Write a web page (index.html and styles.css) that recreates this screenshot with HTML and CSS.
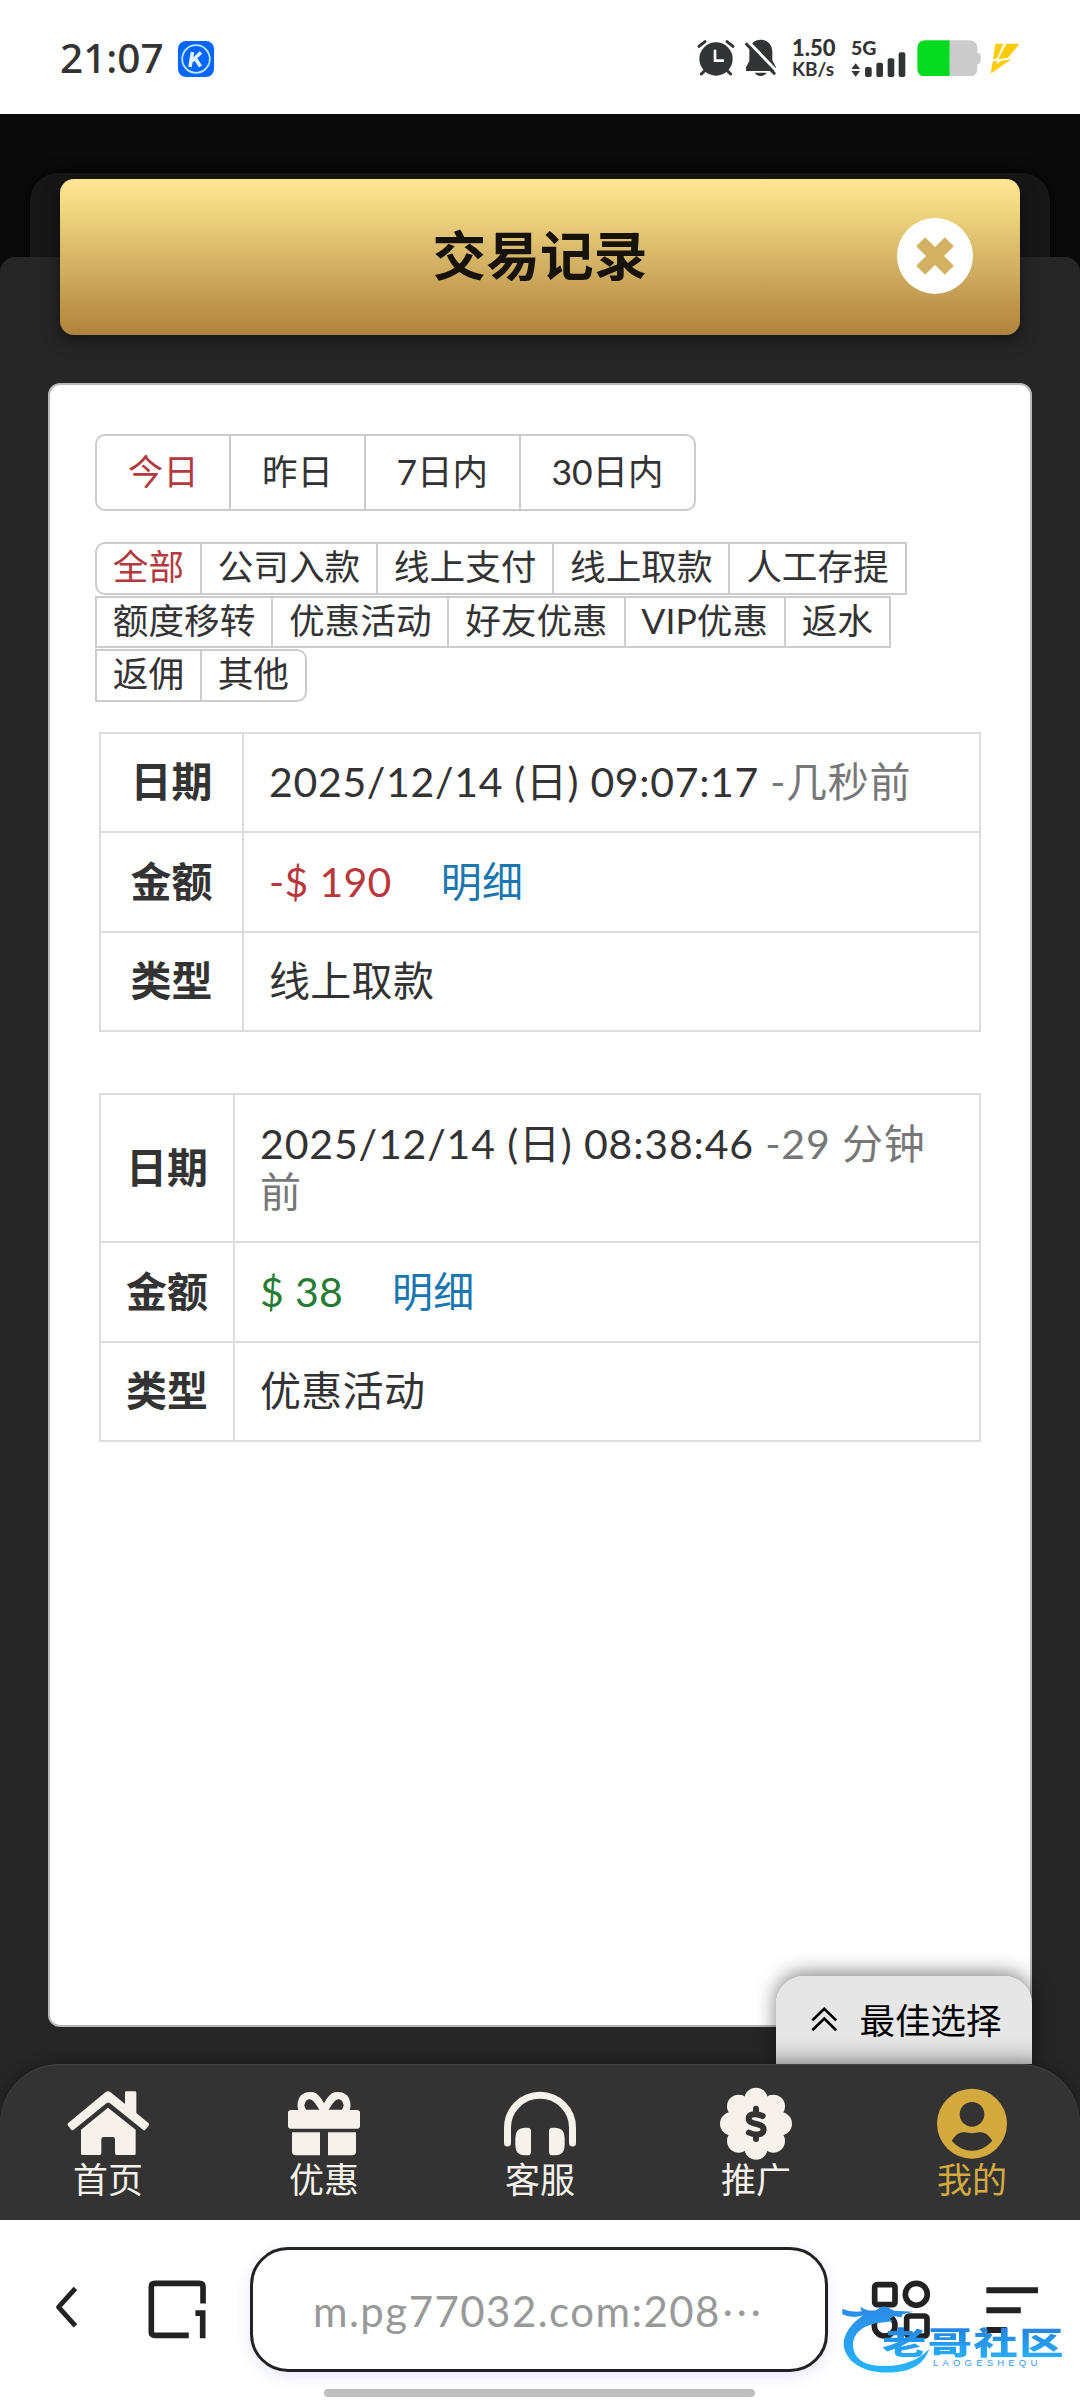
FILE: index.html
```html
<!DOCTYPE html>
<html lang="zh-CN">
<head>
<meta charset="utf-8">
<meta name="viewport" content="width=1080">
<title>交易记录</title>
<link rel="stylesheet" href="styles.css">
</head>
<body>
<header class="status">
  <span class="clock">21:07</span>
  <svg class="app-badge" viewBox="0 0 36 36"><rect width="36" height="36" rx="8" fill="#0765fb"/><circle cx="18" cy="18" r="13.8" fill="none" stroke="#b9e6ff" stroke-width="1.8"/><path d="M14.5 11 12 26M23 11.500 14 20M17 17l5.500 8.500" fill="none" stroke="#dff4ff" stroke-width="3.600"/></svg>
  <div class="status-right">
    <svg class="alarm" viewBox="50 28 114 112"><g fill="none" stroke="#333436" stroke-width="9" stroke-linecap="round"><path d="M56 50 74 36M140 36l18 14M72 124l-9 9M142 124l9 9"/></g><circle cx="107" cy="88" r="50" fill="#333436"/><path d="M104 60v33h27" fill="none" stroke="#fff" stroke-width="8"/></svg>
    <svg class="bell" viewBox="190 28 98 112"><path d="M240 30c22 0 35 16 35 38v24l11 21v11h-90v-11l10-19V68c0-22 12-38 34-38zM222 129h36q-6 10-18 10t-18-10z" fill="#333436"/><path d="M203 36l86 89" stroke="#fff" stroke-width="9"/><path d="M195 41l88 93" stroke="#333436" stroke-width="9"/></svg>
    <div class="speed"><b>1.50</b><span>KB/s</span></div>
    <div class="signal"><b>5G</b>
      <svg viewBox="516 64 164 76"><g fill="#333436"><path d="M517 115l13-17 13 17zM517 121h26l-13 17z"/><rect x="558" y="109" width="20" height="30" rx="6"/><rect x="592" y="96" width="20" height="43" rx="6"/><rect x="626" y="83" width="20" height="56" rx="6"/><rect x="659" y="65" width="20" height="74" rx="6"/></g></svg>
    </div>
    <svg class="battery" viewBox="711 29 192 110"><path d="M809 30h58q25 0 25 25v13q10 0 10 8v17q0 8-10 8v13q0 25-25 25h-58z" fill="#cbcbcb"/><path d="M809 30h-72q-25 0-25 25v59q0 25 25 25h72z" fill="#04db20"/></svg>
    <svg class="bolt" viewBox="930 40 90 92"><path d="M946 42h24l-18 42-13 6zM979 42h40l-36 43-28 3zM938 96l14-4-2 12 12-10 32-5-62 43z" fill="#fecb09"/></svg>
  </div>
</header>

<main class="stage">
  <div class="back-card"></div>
  <div class="sheet"></div>
  <div class="title-bar">
    <h1>交易记录</h1>
    <svg class="close" viewBox="711 654 228 228"><circle cx="825" cy="768" r="114" fill="#fff"/><path d="M782 725l86 86M868 725l-86 86" stroke="#d4b062" stroke-width="38"/></svg>
  </div>
  <section class="panel">
    <div class="tabs days"><span class="on">今日</span><span>昨日</span><span>7日内</span><span>30日内</span></div>
    <div class="tabs kinds"><span class="on">全部</span><span>公司入款</span><span>线上支付</span><span>线上取款</span><span>人工存提</span><span>额度移转</span><span>优惠活动</span><span>好友优惠</span><span>VIP优惠</span><span>返水</span><span>返佣</span><span>其他</span></div>
    <table class="record first">
      <tr><th>日期</th><td class="date">2025/12/14 (日) 09:07:17 <span class="ago">-几秒前</span></td></tr>
      <tr><th>金额</th><td><span class="minus">-$ 190</span><a>明细</a></td></tr>
      <tr><th>类型</th><td>线上取款</td></tr>
    </table>
    <table class="record second">
      <tr class="tall"><th>日期</th><td class="date">2025/12/14 (日) 08:38:46 <span class="ago">-29 分钟前</span></td></tr>
      <tr><th>金额</th><td><span class="plus">$ 38</span><a>明细</a></td></tr>
      <tr><th>类型</th><td>优惠活动</td></tr>
    </table>
  </section>
  <div class="best"><svg viewBox="213 194 80 78"><path d="M217 237l36-35 36 35M217 267l36-35 36 35" fill="none" stroke="#000" stroke-width="8"/></svg><span>最佳选择</span></div>
  <nav class="nav">
    <a><svg viewBox="162 138 324 222"><g fill="#f6f2eb"><path d="M204 250 317 156q7-4 14 0l44 36v-34q0-4 4-4h26q4 0 4 4v61l37 31q3 3 0 7l-10 12q-3 3-7 0L329 189q-5-3-9 0l-99 80q-4 3-7 0l-10-12q-3-3 0-7z"/><path d="M324 203l83 66v72q0 4-4 4h-53q-5 0-5-5v-42q0-7-7-7h-27q-7 0-7 7v42q0 5-5 5h-52q-4 0-4-4v-72z"/></g></svg><span>首页</span></a>
    <a><svg viewBox="810 138 324 222"><g fill="#f6f2eb"><path fill-rule="evenodd" d="M895 212q-8-28 8-46 16-14 38-9 16 5 31 33 15-28 31-33 22-5 38 9 16 18 8 46zM918 209h40q-14-22-21-28-9-6-17 0-12 12-2 28zM986 209h40q10-16-2-28-8-6-17 0-7 6-21 28z"/><rect x="864" y="210" width="216" height="56" rx="9"/><path d="M876 277h84v69h-72q-12 0-12-12zM984 277h84v57q0 12-12 12h-72z"/></g></svg><span>优惠</span></a>
    <a><svg viewBox="258 138 324 222"><path d="M322.500 309v-46a97.500 97.500 0 0 1 195 0v46" fill="none" stroke="#f6f2eb" stroke-width="21" stroke-linecap="round"/><path d="M375 263h8q10 0 10 11v61q0 11-10 11h-8q-29 0-29-30v-23q0-30 29-30zM465 263h-8q-10 0-10 11v61q0 11 10 11h8q29 0 29-30v-23q0-30-29-30z" fill="#f6f2eb"/></svg><span>客服</span></a>
    <a><svg viewBox="906 138 324 222"><g fill="#f6f2eb"><circle cx="1068" cy="251" r="75"/><circle cx="1068" cy="178" r="35"/><circle cx="1068" cy="324" r="35"/><circle cx="995" cy="251" r="35"/><circle cx="1141" cy="251" r="35"/><circle cx="1016" cy="199" r="35"/><circle cx="1120" cy="199" r="35"/><circle cx="1016" cy="303" r="35"/><circle cx="1120" cy="303" r="35"/></g><path d="M1088 228c-16-8-42-9-42 8 0 20 45 11 45 32 0 19-28 18-44 10M1068 206v14M1068 284v13" fill="none" stroke="#333" stroke-width="18" stroke-linecap="round"/></svg><span>推广</span></a>
    <a class="active"><svg viewBox="534 438 324 222"><circle cx="696" cy="551" r="105" fill="#d4aa3e"/><circle cx="696" cy="523" r="37" fill="#333"/><path d="M635 602q18-28 39-25 22 5 44 0 21-3 39 25-26 30-61 30t-61-30z" fill="#333"/></svg><span>我的</span></a>
  </nav>
</main>

<footer class="browser">
  <div class="tools">
    <svg class="back" viewBox="160 740 74 130"><path d="M226 746l-52 58 52 58" fill="none" stroke="#222" stroke-width="15" stroke-linejoin="round"/></svg>
    <svg class="windows" viewBox="444 720 176 178"><path d="M609 791v-50q0-11-11-11H464q-11 0-11 11v136q0 10 11 10h102M586 820h22v76" fill="none" stroke="#222" stroke-width="17"/></svg>
    <div class="address">m.pg77032.com:208<i>⋯</i></div>
    <svg class="apps" viewBox="275 238 180 180"><g fill="none" stroke="#222" stroke-width="17"><rect x="286" y="252" width="61" height="60" rx="7"/><circle cx="411" cy="281" r="33"/><circle cx="316" cy="375" r="31"/><rect x="382" y="346" width="61" height="60" rx="7"/></g></svg>
    <svg class="menu" viewBox="618 255 158 145"><path d="M618 268h156M618 328h104M618 388h62" stroke="#222" stroke-width="18"/></svg>
  </div>
  <div class="home-bar"></div>
  <div class="watermark">
    <svg viewBox="0 0 735 360">
      <defs><linearGradient id="wm" x1="0" y1="0" x2="0" y2="1"><stop offset="0" stop-color="#2b8be6"/><stop offset="1" stop-color="#27b4fb"/></linearGradient></defs>
      <path d="M22 116q26 12 58 8l-4-14q25 16 48 10 17-17 36-7l18 9 58 3-33 8-3 9-24-3-12 8 10 7-38 4q-22 1-48 14-42 25-32 68 13 50 97 48 84-2 130-52-20 61-96 70-91 9-138-34-42-44-8-94 16-24 44-42-34 12-63-3z" fill="url(#wm)"/>
    </svg>
    <span class="wm-name">老哥社区</span>
    <span class="wm-latin">LAOGESHEQU</span>
  </div>
</footer>
</body>
</html>
```

FILE: styles.css
```css
* { box-sizing: border-box; }
body {
  margin: 0;
  width: 1080px;
  height: 2400px;
  display: flex;
  flex-direction: column;
  overflow: hidden;
  background: #fff;
  color: #333;
  font-family: Lato, "Noto Sans CJK SC", sans-serif;
}
svg { display: block; flex: none; }

.status {
  height: 114px;
  padding: 2px 70px 0 60px;
  display: flex;
  align-items: center;
}
.clock { width: 118px; font: 500 40.500px/1 "Noto Sans", sans-serif; letter-spacing: 0; }
.app-badge { width: 36px; height: 36px; margin-top: 2px; }
.status-right { margin-left: auto; display: flex; align-items: center; height: 40px; }
.alarm { width: 38px; height: 37.300px; }
.bell { width: 32.700px; height: 37.300px; margin-left: 9px; }
.speed { width: 44px; margin-left: 15px; display: flex; flex-direction: column; white-space: nowrap; font: 700 19px/20px Lato, sans-serif; }
.speed b { font-size: 22px; line-height: 22px; font-weight: 900; }
.signal { position: relative; width: 55px; height: 38px; margin-left: 15px; font: 900 19.500px/17px Lato, sans-serif; }
.signal b { position: absolute; left: 0; top: 0; font-weight: 900; }
.signal svg { width: 54.700px; height: 25.300px; margin-top: 12.500px; }
.battery { width: 64px; height: 36.700px; margin-left: 11px; }
.bolt { width: 30px; height: 30.700px; margin-left: 9px; margin-right: -10px; }

.stage {
  position: relative;
  height: 2106px;
  display: flex;
  flex-direction: column;
  background: #0a0a0a;
}
.back-card { position: absolute; left: 30px; right: 30px; top: 59px; height: 300px; border-radius: 28px; background: #171717; box-shadow: 0 0 14px rgba(0,0,0,.7); }
.sheet { position: absolute; inset: 143px 0 0; border-radius: 15px 15px 0 0; background: #262626; }
.title-bar {
  position: relative;
  margin: 65px 60px 0;
  height: 156px;
  border-radius: 14px;
  background: linear-gradient(#fee693, #f0d680 20%, #d4b466 52%, #b4873f 96%, #a98343);
  box-shadow: 0 5px 16px rgba(0,0,0,.5);
  display: flex;
  align-items: center;
  justify-content: flex-end;
  padding-right: 47px;
}
.title-bar h1 { margin: 0; position: absolute; left: 0; right: 0; text-align: center; font-size: 53.700px; line-height: 78px; top: 37px; font-weight: 700; color: #17120a; }
.close { width: 76px; height: 76px; margin-bottom: 2px; }

.panel {
  position: relative;
  height: 1644px;
  margin: 48px 48px 0;
  padding: 49px 45px;
  border: 2px solid #b8b8b8;
  border-radius: 12px;
  background: #fff;
}
.tabs { display: flex; flex-wrap: wrap; font-size: 35.500px; }
.tabs span { border: 2.500px solid #ccc; margin-right: -2px; white-space: nowrap; text-align: center; }
.tabs .on { color: #b03a3e; }
.tabs span:first-child { border-radius: 10px 0 0 10px; }
.tabs span:last-child { border-radius: 0 10px 10px 0; }
.days span { height: 77px; line-height: 71px; padding: 0 30.700px; }
.kinds { margin-top: 31px; row-gap: 1px; width: 885px; font-size: 35.650px; }
.kinds span { height: 52.500px; line-height: 46px; padding: 0 15.800px; }

.record { width: 882px; margin-left: 4px; border-collapse: collapse; font-size: 41px; line-height: 48px; }
.first { margin-top: 30px; }
.second { margin-top: 61px; }
.record th, .record td { border: 2px solid #ddd; height: 99.500px; padding: 0 26px 0 25px; text-align: left; }
.record th { width: 143px; padding: 0; text-align: center; font-weight: 700; }
.second th { width: 134px; }
.record .tall th, .record .tall td { height: 148px; }
.record td { letter-spacing: .3px; }
.record .date { letter-spacing: .68px; }
.record.second .date { letter-spacing: .85px; }
.ago { color: #777; }
.minus { color: #b8383d; }
.plus { color: #277c35; }
.record a { color: #1a76b0; margin-left: 49px; }

.best {
  position: absolute;
  left: 776px;
  bottom: 156px;
  width: 256px;
  height: 88px;
  padding: 0 0 3px 35px;
  display: flex;
  align-items: center;
  gap: 22px;
  border-radius: 28px 28px 0 0;
  background: linear-gradient(#e6e6e6 70%, #c8c8c8);
  box-shadow: 0 -3px 20px rgba(0,0,0,.5);
  color: #000;
  font-size: 35.500px;
  white-space: nowrap;
}
.best svg { width: 26.500px; height: 26px; }
.nav {
  position: relative;
  margin-top: 37px;
  height: 156px;
  padding-top: 22px;
  display: grid;
  grid-template-columns: repeat(5, 1fr);
  border-radius: 60px 60px 0 0;
  background: #333;
  box-shadow: 0 -2px 14px rgba(0,0,0,.3), inset 0 1px 0 #444;
  color: #f6f2eb;
}
.nav a { display: flex; flex-direction: column; align-items: center; font-size: 35px; line-height: 38px; }
.nav svg { width: 108px; height: 74px; }
.nav .active { color: #d4aa3e; }

.browser { position: relative; height: 180px; background: #fff; }
.tools { display: flex; align-items: center; padding: 27px 0 0 54px; }
.back { width: 24px; height: 43px; margin-top: -4px; }
.windows { width: 59px; height: 59px; margin-left: 70px; }
.address {
  flex: none;
  width: 578px;
  height: 125px;
  margin-left: 43px;
  padding: 2px 0 0 60px;
  display: flex;
  align-items: center;
  border: 3.500px solid #222;
  border-radius: 38px;
  box-shadow: 0 4px 16px rgba(80,80,230,.14);
  color: #999;
  font-size: 42px;
  letter-spacing: 1.450px;
  white-space: nowrap;
}
.address i { font-style: normal; }
.apps { width: 60px; height: 60px; margin-left: 43px; }
.menu { width: 53px; height: 48px; margin-left: 55px; }
.home-bar { position: absolute; left: 324px; top: 169px; width: 431px; height: 8px; border-radius: 4px; background: #bfbfbf; }

.watermark { position: absolute; left: 835px; top: 50px; width: 245px; height: 120px; }
.watermark svg { width: 245px; height: 120px; }
.wm-name { position: absolute; left: 47px; top: 55px; font-size: 31px; line-height: 34px; font-weight: 900; white-space: nowrap; letter-spacing: 1px; transform: scaleX(1.43); transform-origin: 0 0; background: linear-gradient(#2480de, #27b0fc); -webkit-background-clip: text; background-clip: text; color: transparent; }
.wm-latin { position: absolute; left: 98px; top: 87px; font: 9.500px/12px "Liberation Sans", sans-serif; letter-spacing: 4.200px; color: #2f9ae8; white-space: nowrap; }
```
